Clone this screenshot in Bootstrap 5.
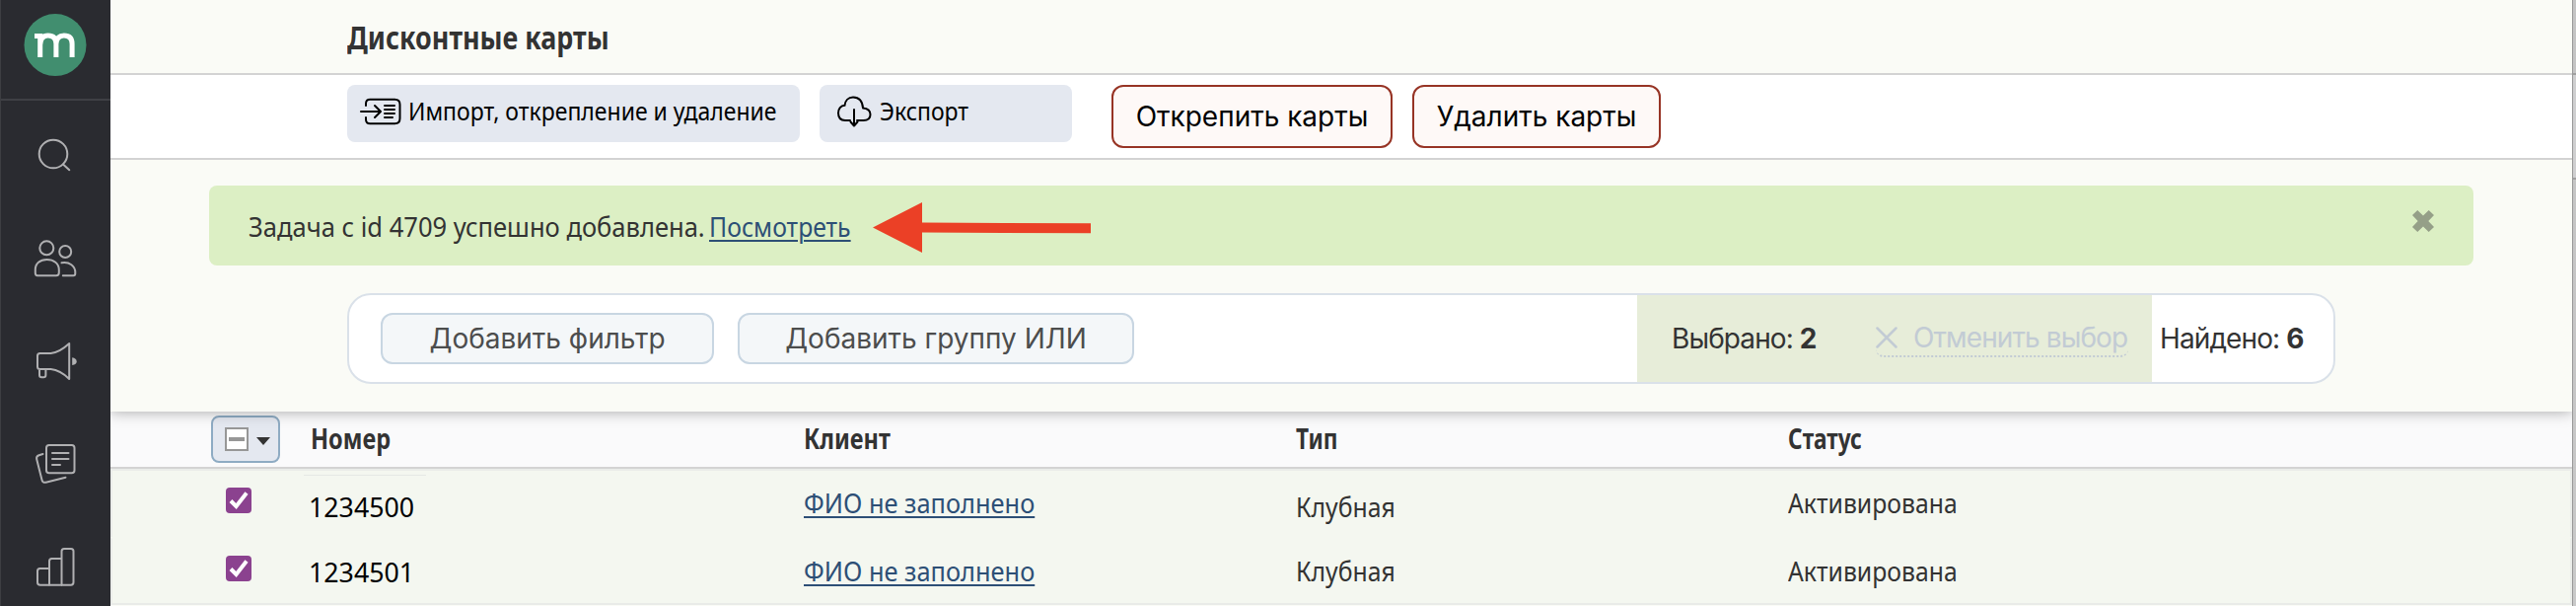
<!DOCTYPE html>
<html lang="ru">
<head>
<meta charset="utf-8">
<title>Дисконтные карты</title>
<link rel="stylesheet" href="https://cdn.jsdelivr.net/npm/bootstrap@5.3.0/dist/css/bootstrap.min.css">
<style>
  body { font-family: "Noto Sans", sans-serif; font-size: 28px; line-height: 40px; color: #333; background: #fafbf6; overflow: hidden; height: 614px; }
  .inter { font-family: Inter, sans-serif; }
  .tx { display: inline-block; white-space: nowrap; transform-origin: 0 50%; transform: scaleX(var(--w, .885)); }
  .w-bold { --w: .84; } .w-short { --w: .81; } .w-num { --w: .955; margin-left: -2px; } .w-client { --w: .907; } .w-alert { --w: .912; }
  a.tx { color: #2d4f76; text-decoration: underline; text-decoration-thickness: 2px; text-underline-offset: 3px; }

  .sidebar { width: 112px; background: #2a2b30; border-left: 1px solid #3d3e42; }
  .sidebar svg { display: block; width: 111px; }
  .brand { height: 102px; border-bottom: 2px solid #3f4045; }
  .ico { fill: none; stroke: #b0b0b2; stroke-width: 2; stroke-linecap: round; stroke-linejoin: round; }

  .page-head { height: 76px; padding: 2px 0 0 240px; border-bottom: 2px solid #d3d3d3; }
  .page-head h1 { font-size: 32px; font-weight: 700; line-height: 40px; }
  .toolbar { height: 86px; padding: 10px 0 0 240px; background: #fff; border-bottom: 2px solid #d3d3d3; }
  .btn-soft { height: 58px; padding: 0 0 5px 13px; border: 0; border-radius: 8px; background: #e4e8f0; font-size: 26px; color: #000; }
  .btn-import { width: 459px; } .btn-export { width: 256px; margin-left: 20px; padding-left: 17px; }
  .btn-danger-soft { height: 64px; padding: 0; border: 2px solid #973425; border-radius: 12px; background: #fef9f7; font-size: 28px; color: #000; }
  .btn-unlink { width: 285px; margin-left: 40px; } .btn-remove { width: 252px; margin-left: 20px; }

  .workspace { height: 255px; padding-top: 26px; box-shadow: 0 0 14px rgba(0,0,0,.34); clip-path: inset(0 0 -30px 0); position: relative; z-index: 1; background: #fafbf6; }
  .notice { width: 2296px; height: 81px; margin: 0 0 28px 100px; padding: 0 40px; border: 0; border-radius: 8px; background: #dcefc4; color: #333; }
  .notice-msg { width: 467px; } .notice-link { width: 166px; }
  .notice-close { margin-bottom: 10px; }
  .filterbar { width: 2016px; height: 92px; margin-left: 240px; padding-left: 32px; border: 2px solid #dae1e9; border-radius: 24px; background: #fff; overflow: hidden; }
  .btn-filter { width: 338px; height: 52px; padding: 0; border: 2px solid #c8d6e2; border-radius: 12px; background: #f4f7f9; font-size: 28px; color: #4c4d4d; }
  .btn-group-or { width: 402px; margin-left: 24px; }
  .picked { width: 522px; padding-left: 35px; background: #e7edd9; }
  .tally { letter-spacing: -.9px; }
  .picked .tally { width: 207px; }
  .found { width: 184px; padding-left: 8px; }
  .undo { width: 256px; height: 38px; border-bottom: 2px dotted #c2cbd4; border-radius: 8px; color: #c2cbd4; line-height: 30px; letter-spacing: -.9px; }

  .grid-row { display: grid; grid-template-columns: 203px 500px 499px 499px 1fr; }
  .grid-head { height: 58px; padding-top: 7px; background: #fafafb; border-bottom: 2px solid #d3d3d3; font-weight: 700; }
  .grid-item { grid-template-columns: 201px 500px 499px 499px 1fr; height: 69px; border: 2px solid #eaece9; border-bottom: 0; background: #f4f7f0; }
  .grid-item + .grid-item { border-top-color: #f4f7f0; border-bottom: 2px solid #e9ebe8; }
  .grid-item > div { padding-top: 12px; }
  .grid-item > div.low { padding-top: 16px; }
  .grid-item > div.mid { padding-top: 13px; }
  .grid-item > div.pick { padding: 17px 0 0 115px; }
  .toggle-all { width: 70px; height: 48px; margin: -3px 0 0 102px; border: 2px solid #8eabc3; border-radius: 8px; background: #e4e8f0; }
  .hairline { width: 124px; height: 1px; margin: -12px 0 11px -7px; background: #e6e9e5; }
  .check { display: block; width: 26px; height: 26px; }

  .edge { width: 4px; background: linear-gradient(#c4c4c4, #c6c6c6 60%, #c9c9c9); border-left: 1px solid #999; }
  .edge div { border-bottom: 2px solid #a0a0a0; }
  .edge div:first-child { height: 76px; } .edge div:last-child { height: 106px; background: #cfcfd0; }
</style>
</head>
<body class="d-flex">
<nav class="sidebar flex-shrink-0">
  <div class="brand"><svg height="100" viewBox="1 0 111 100"><circle cx="56" cy="45.600" r="31.500" fill="#418e6f"/>
    <path d="M35 36.500h5.700v21.500M40.700 45.500q.3-9.500 8-9.500 8.200 0 8.200 8.500v13.500M56.900 44.500q.5-8.500 8-8.500 8.200 0 8.200 8.500v13.500" fill="none" stroke="#fff" stroke-width="5"/></svg></div>
  <svg class="ico" height="512" viewBox="1 102 111 512">
    <circle cx="54" cy="156" r="14.300"/><path d="M64 166.500l6.300 5.700"/>
    <circle cx="47.300" cy="251.300" r="7"/><circle cx="66.200" cy="255" r="6"/>
    <path d="M38 279.300h19q2.800 0 2.800-3v-3c0-6.500-5.300-10.300-12.300-10.300s-11.700 4-11.700 10.300v3.300q0 2.700 2.200 2.700zM62.500 266.300c8 -1.300 13.800 3.200 13.800 9.700v1q0 2.300-2 2.300h-10.500"/>
    <path d="M40.500 358h11q9-1 18.700-10v36q-9-9-18.700-10h-11q-2.500 0-2.500-2.500v-11q0-2.500 2.500-2.500zM40 374.500v5.500q0 2.200 2.200 2.200h2q2.200 0 2.200-2.200v-5.500"/>
    <path d="M73.200 362.300q4.500.8 4.500 3.900t-4.500 3.700z" fill="#b0b0b2" stroke="none"/>
    <rect x="47" y="451" width="28.500" height="28.300" rx="2.800"/><path d="M53 459h16.500M53 465h16.500M53 471h8M43.500 460l-4 1.200q-3 1-2.300 4l5.300 21q.8 3.300 4 2.500l20-5"/>
    <path d="M50 593v-17H40.500q-2.500 0-2.500 2.500V590q0 2.800 2.800 2.800h31q2.700 0 2.700-2.700v-31.600q0-2.500-2.500-2.500h-7q-2.500 0-2.500 2.500V593M50 576v-7.500q0-2.500 2.500-2.500H62"/>
  </svg>
</nav>

<main class="flex-grow-1">
  <header class="page-head d-flex align-items-center"><h1 class="m-0 tx w-bold">Дисконтные карты</h1></header>

  <div class="toolbar d-flex align-items-start">
    <button class="btn btn-soft btn-import d-flex align-items-center text-start">
      <svg class="flex-shrink-0" width="49" height="30" viewBox="0 0 49 30" fill="none" stroke="#000" stroke-width="2" stroke-linecap="round" stroke-linejoin="round"><path d="M6 9V7q0-4.300 4.300-4.300h25q5.200 0 5.200 5.200v14.200q0 5.200-5.200 5.200h-25Q6 27.300 6 23v-2M1 15h19M15 9l6 6-6 6M25 9h10M25 13h10M25 17h10M25 21h8"/></svg>
      <span class="tx">Импорт, открепление и удаление</span></button>
    <button class="btn btn-soft btn-export d-flex align-items-center text-start">
      <svg class="flex-shrink-0" width="44" height="34" viewBox="0 0 44 34" fill="none" stroke="#000" stroke-width="2" stroke-linecap="round" stroke-linejoin="round"><path d="M14 26H9C4 26 2 23 2 18.500c0-4 2.500-7.500 6.500-7.700C9 6 12 2.500 17 2.500c6 0 9.500 4 10 11 4.500.5 7.500 3 7.500 6.500 0 4-3 6-7 6h-6.500M18 15v16M14.500 27.500l3.500 4 3.500-4"/></svg>
      <span class="tx">Экспорт</span></button>
    <button class="btn btn-danger-soft btn-unlink inter">Открепить карты</button>
    <button class="btn btn-danger-soft btn-remove inter">Удалить карты</button>
  </div>

  <section class="workspace">
    <div class="alert notice d-flex align-items-center" role="alert">
      <span class="notice-msg"><span class="tx w-alert">Задача с id 4709 успешно добавлена.</span></span>
      <span class="notice-link"><a class="tx" href="#">Посмотреть</a></span>
      <svg class="mt-1" width="222" height="52" viewBox="0 0 222 52" fill="#eb4026"><path d="M0 25.500L50 0v20.500l171 .8v10l-171-.8V51z"/></svg>
      <svg class="notice-close ms-auto" width="22" height="22" viewBox="0 0 22 22" fill="#959f88"><path d="M0 5L5.300 0 11 5.400 16.700 0 22 5l-5.700 6 5.700 6-5.300 5-5.700-5.400L5.300 22 0 17l5.700-6z"/></svg>
    </div>
    <div class="filterbar d-flex align-items-center inter">
      <button class="btn btn-filter inter">Добавить фильтр</button>
      <button class="btn btn-filter btn-group-or inter">Добавить группу ИЛИ</button>
      <div class="picked d-flex align-items-center align-self-stretch ms-auto">
        <span class="tally text-nowrap">Выбрано: <b>2</b></span>
        <a class="undo d-flex align-items-center text-decoration-none text-nowrap" href="#"><svg class="flex-shrink-0" width="38" height="22" viewBox="0 0 38 22" stroke="#c2cbd4" stroke-width="2.500" stroke-linecap="round"><path d="M1.500 1.500l19 19M20.500 1.500l-19 19"/></svg>Отменить выбор</a>
      </div>
      <span class="found tally text-nowrap">Найдено: <b>6</b></span>
    </div>
  </section>

  <section>
    <div class="grid-row grid-head">
      <div><div class="toggle-all"><svg class="d-block" width="66" height="44" viewBox="0 0 66 44"><rect x="13" y="11" width="22" height="22" fill="#fff" stroke="#979797" stroke-width="2"/><path d="M16 20h16v4H16z" fill="#979797"/><path d="M44 20h14l-7 8z" fill="#333"/></svg></div></div>
      <div><span class="tx w-bold">Номер</span></div><div><span class="tx w-bold">Клиент</span></div><div><span class="tx w-short">Тип</span></div><div><span class="tx w-short">Статус</span></div>
    </div>
    <div class="grid-row grid-item">
      <div class="pick"><svg class="check" viewBox="0 0 26 26"><rect width="26" height="26" rx="4" fill="#8b428f"/><path d="M5 13.500l5.500 5.500L21 5.500" fill="none" stroke="#fff" stroke-width="4"/></svg></div>
      <div class="low"><div class="hairline"></div><span class="tx w-num text-black">1234500</span></div>
      <div><a class="tx w-client" href="#">ФИО не заполнено</a></div>
      <div class="low"><span class="tx">Клубная</span></div>
      <div><span class="tx">Активирована</span></div>
    </div>
    <div class="grid-row grid-item">
      <div class="pick"><svg class="check" viewBox="0 0 26 26"><rect width="26" height="26" rx="4" fill="#8b428f"/><path d="M5 13.500l5.500 5.500L21 5.500" fill="none" stroke="#fff" stroke-width="4"/></svg></div>
      <div class="mid"><span class="tx w-num text-black">1234501</span></div>
      <div><a class="tx w-client" href="#">ФИО не заполнено</a></div>
      <div><span class="tx">Клубная</span></div>
      <div><span class="tx">Активирована</span></div>
    </div>
  </section>
</main>
<aside class="edge flex-shrink-0"><div></div><div></div></aside>
<script src="https://cdn.jsdelivr.net/npm/bootstrap@5.3.0/dist/js/bootstrap.bundle.min.js"></script>
</body>
</html>
